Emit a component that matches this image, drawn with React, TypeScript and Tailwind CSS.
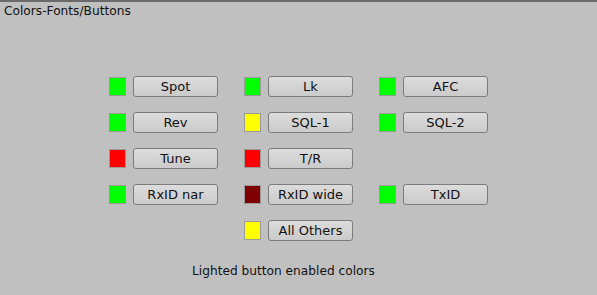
const rows: { color: string; label: string }[][] = [
  [
    { color: "bg-[#00ff00]", label: "Spot" },
    { color: "bg-[#00ff00]", label: "Lk" },
    { color: "bg-[#00ff00]", label: "AFC" },
  ],
  [
    { color: "bg-[#00ff00]", label: "Rev" },
    { color: "bg-[#ffff00]", label: "SQL-1" },
    { color: "bg-[#00ff00]", label: "SQL-2" },
  ],
  [
    { color: "bg-[#ff0000]", label: "Tune" },
    { color: "bg-[#ff0000]", label: "T/R" },
  ],
  [
    { color: "bg-[#00ff00]", label: "RxID nar" },
    { color: "bg-[#7f0000]", label: "RxID wide" },
    { color: "bg-[#00ff00]", label: "TxID" },
  ],
];

function LightButton({ color, label }: { color: string; label: string }) {
  return (
    <div className="flex items-center gap-[7px]">
      <span className={`h-[19px] w-[17px] border border-[#9a9a9a] ${color}`} />
      <button className="h-[21px] w-[85px] rounded-[3px] border border-[#7c7c7c] bg-gradient-to-b from-[#dcdcdc] to-[#cbcbcb] text-[13px] leading-none text-[#111]">
        {label}
      </button>
    </div>
  );
}

export default function App() {
  return (
    <div
      className="h-[295px] w-[597px] border-t-2 border-t-[#6a6a6a] bg-[#c0c0c0] text-[12.2px] text-[#111]"
      style={{ fontFamily: '"DejaVu Sans", sans-serif' }}
    >
      <div className="px-[4px] pt-[1px] leading-[16px]">Colors-Fonts/Buttons</div>
      <div className="mt-[57px] grid grid-cols-[135px_135px_135px] gap-y-[15px] pl-[109px]">
        {rows.map((row, i) =>
          [0, 1, 2].map((j) =>
            row[j] ? (
              <LightButton key={`${i}-${j}`} {...row[j]} />
            ) : (
              <div key={`${i}-${j}`} />
            )
          )
        )}
        <div />
        <LightButton color="bg-[#ffff00]" label="All Others" />
        <div />
      </div>
      <div className="mt-[22px] pl-[192px] leading-[16px]">Lighted button enabled colors</div>
    </div>
  );
}
